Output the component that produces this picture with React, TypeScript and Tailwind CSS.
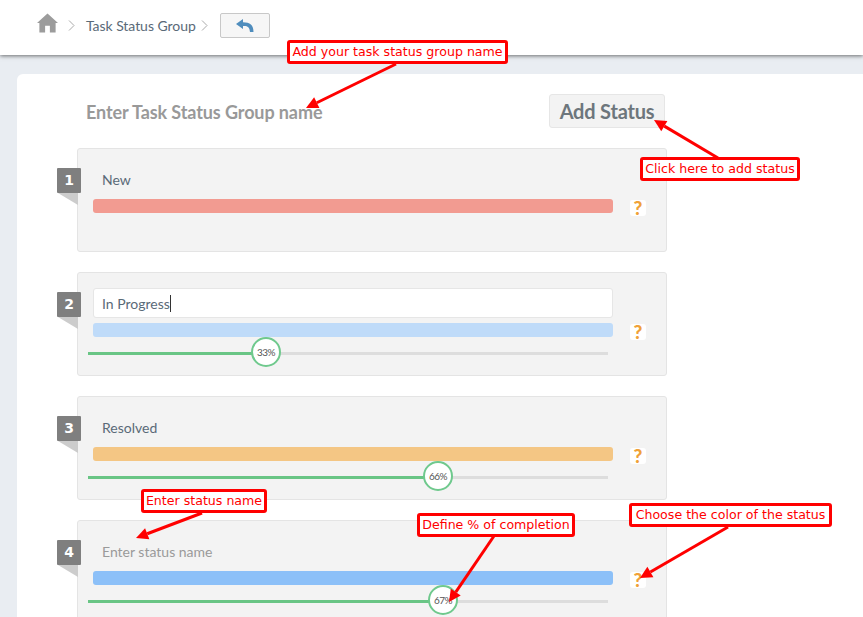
const statuses = [
  { n: 1, name: "New", kind: "text", bar: "bg-[#f29b91]", knob: null, label: "" },
  { n: 2, name: "In Progress", kind: "input", bar: "bg-[#bfdbf9]", knob: 178, label: "33%" },
  { n: 3, name: "Resolved", kind: "text", bar: "bg-[#f4c684]", knob: 350, label: "66%" },
  { n: 4, name: "Enter status name", kind: "placeholder", bar: "bg-[#8cc0f8]", knob: 355, label: "67%" },
];

const callouts = [
  { text: "Add your task status group name", cls: "left-[287px] top-[40px] w-[221px]" },
  { text: "Click here to add status", cls: "left-[640px] top-[157px] w-[160px]" },
  { text: "Enter status name", cls: "left-[141px] top-[489px] w-[126px]" },
  { text: "Define % of completion", cls: "left-[417px] top-[513px] w-[158px]" },
  { text: "Choose the color of the status", cls: "left-[629px] top-[503px] w-[203px]" },
];

// shaft from -> tip
const arrows = [
  [396, 64, 306, 108],
  [718, 158, 654, 120],
  [202, 513, 136, 538],
  [494, 536, 449, 602],
  [728, 527, 640, 578],
];

function Arrow({ a }: { a: number[] }) {
  const [x1, y1, x2, y2] = a;
  const len = Math.hypot(x2 - x1, y2 - y1);
  const ux = (x2 - x1) / len;
  const uy = (y2 - y1) / len;
  const bx = x2 - ux * 12;
  const by = y2 - uy * 12;
  const head = `${x2},${y2} ${bx - uy * 6},${by + ux * 6} ${bx + uy * 6},${by - ux * 6}`;
  return (
    <g>
      <line x1={x1} y1={y1} x2={bx} y2={by} stroke="#ff0000" strokeWidth="3" />
      <polygon points={head} fill="#ff0000" />
    </g>
  );
}

function Slider({ pos, label }: { pos: number; label: string }) {
  return (
    <div className="relative ml-[-5px] mt-[15px] h-[3px] w-[520px] bg-[#dddddd]">
      <div className="h-full bg-[#69c585]" style={{ width: pos }} />
      <div
        className="absolute top-[-15px] flex h-[30px] w-[30px] items-center justify-center rounded-full border-2 border-[#6fc98d] bg-white text-[10px] tracking-[-0.5px] text-[#555555]"
        style={{ left: pos - 15 }}
      >
        {label}
      </div>
    </div>
  );
}

function StatusCard({ s }: { s: (typeof statuses)[number] }) {
  return (
    <div className="relative h-[104px] w-[590px] shrink-0 rounded-[3px] border border-[#e4e4e4] bg-[#f3f3f3] pl-[15px] pt-[15px]">
      <div className="absolute left-[-21px] top-[19px] flex h-[25px] w-[24px] items-center justify-center rounded-[1px] bg-[#7f7f7f] font-['DejaVu_Sans'] text-[14px] font-bold text-white">
        {s.n}
      </div>
      <div className="absolute left-[-20px] top-[44px] h-0 w-0 border-l-[20px] border-t-[12px] border-l-transparent border-t-[#cccccc]" />
      <div
        className={
          s.kind === "input"
            ? "flex h-[30px] w-[520px] items-center rounded-[3px] border border-[#e6e6e6] bg-white pl-[8px] text-[14px] text-[#5a6a78]"
            : `flex h-[30px] w-[520px] items-center pl-[9px] text-[14px] ${s.kind === "placeholder" ? "text-[#9a9a9a]" : "text-[#5a6a78]"}`
        }
      >
        {s.name}
        {s.kind === "input" && <span className="h-[17px] w-px bg-[#333]" />}
      </div>
      <div className={`mt-[5px] h-[14px] w-[520px] rounded-[3px] ${s.bar}`} />
      {s.knob !== null && <Slider pos={s.knob} label={s.label} />}
      <div className="absolute left-[552px] top-[51px] flex h-[16px] w-[16px] items-center justify-center rounded-[3px] bg-white pb-[1px] text-[19px] font-black leading-none text-[#f0a138]">
        ?
      </div>
    </div>
  );
}

export default function App() {
  return (
    <div className="relative h-[617px] w-[863px] overflow-hidden bg-[#e9edf2] font-['Lato',sans-serif]">
      <header className="relative flex h-[55px] items-center bg-white pb-[4px] pl-[37px] shadow-[0_1px_4px_rgba(0,0,0,0.55)]">
        <svg width="21" height="20" viewBox="0 0 22 20" className="mb-[5px]">
          <path d="M11 0 L22 10 L19.5 10 L19.5 20 L13.5 20 L13.5 13 L8.5 13 L8.5 20 L2.5 20 L2.5 10 L0 10 Z" fill="#9c9c9c" />
        </svg>
        <svg width="7" height="11" viewBox="0 0 7 11" className="ml-[10px]">
          <path d="M1 0.5 L6 5.5 L1 10.5" fill="none" stroke="#aaaaaa" />
        </svg>
        <span className="ml-[11px] text-[14px] tracking-[-0.05px] text-[#5a6a78]">Task Status Group</span>
        <svg width="7" height="11" viewBox="0 0 7 11" className="ml-[5px]">
          <path d="M1 0.5 L6 5.5 L1 10.5" fill="none" stroke="#aaaaaa" />
        </svg>
        <button className="ml-[12px] flex h-[25px] w-[50px] items-center justify-center rounded-[2px] border border-[#c8c8c8] bg-[#f6f6f6]">
          <svg width="18" height="13" viewBox="0 0 18 13">
            <path d="M7 0 L0 5 L7 10 L7 7 C11 6.6 13.5 7.5 14 13 L17.5 13 C17.5 6 14 3.2 7 3.2 Z" fill="#4f8dbd" />
          </svg>
        </button>
      </header>
      <main className="ml-[17px] mt-[19px] flex h-[600px] flex-col rounded-tl-[6px] bg-white pl-[60px]">
        <div className="flex h-[74px] w-[588px] items-start justify-between pl-[9px] pt-[20px]">
          <div className="flex h-[36px] items-center text-[18px] font-bold tracking-[-0.1px] text-[#999999]">
            Enter Task Status Group name
          </div>
          <button className="flex h-[34px] w-[116px] items-center justify-center rounded-[3px] border border-[#e6e6e6] bg-[#f3f3f3] text-[20px] font-bold tracking-[-0.2px] text-[#6d767c]">
            Add Status
          </button>
        </div>
        <div className="flex flex-col gap-[20px]">
          {statuses.map((s) => (
            <StatusCard key={s.n} s={s} />
          ))}
        </div>
      </main>
      <svg width="863" height="617" className="absolute left-0 top-0">
        {arrows.map((a, i) => (
          <Arrow key={i} a={a} />
        ))}
      </svg>
      {callouts.map((c) => (
        <div
          key={c.text}
          className={`absolute flex h-[24px] items-center justify-center whitespace-nowrap rounded-[3px] border-[3px] border-[#ff0000] bg-white pt-[1px] font-['DejaVu_Sans'] text-[12.6px] text-[#ff0000] ${c.cls}`}
        >
          {c.text}
        </div>
      ))}
    </div>
  );
}
